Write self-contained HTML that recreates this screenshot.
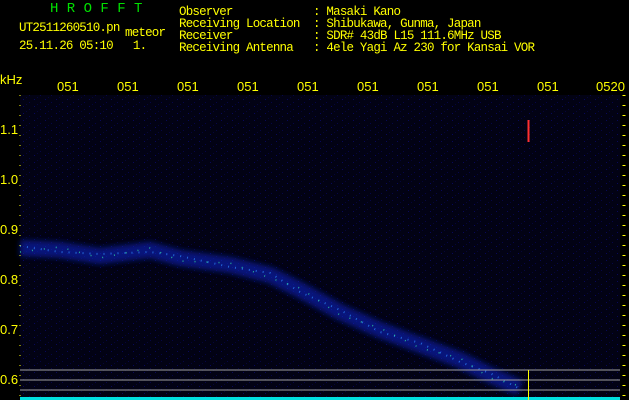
<!DOCTYPE html>
<html><head><style>
body{margin:0;background:#000;width:629px;height:400px;overflow:hidden;position:relative;font-family:"Liberation Mono",monospace;}
.t{position:absolute;color:#ffff00;font-size:12.5px;letter-spacing:-0.8px;line-height:12px;white-space:pre;}
.x{position:absolute;color:#ffff00;font-size:13px;top:79px;font-family:"Liberation Sans",sans-serif;}
.y{position:absolute;color:#ffff00;font-size:13px;left:0;font-family:"Liberation Sans",sans-serif;}
</style></head><body>
<svg width="629" height="400" style="position:absolute;left:0;top:0">
<defs>
<filter id="b"><feGaussianBlur stdDeviation="3"/></filter>
<pattern id="n" width="11" height="7" patternUnits="userSpaceOnUse">
<rect width="11" height="7" fill="#020214"/>
<rect x="1" y="1" width="1" height="1" fill="#08085a"/>
<rect x="7" y="4" width="1" height="1" fill="#060648"/>
<rect x="4" y="6" width="1" height="1" fill="#05053a"/>
</pattern>
</defs>
<rect x="20" y="95" width="600" height="305" fill="url(#n)"/>
<polyline points="20,248 60,250 100,256 150,250 180,258 230,265 270,275 300,290 340,312 380,330 420,345 460,360 490,375 520,388" fill="none" stroke="#0a20c0" stroke-width="16" opacity="0.6" filter="url(#b)"/>
<polyline points="20,246 60,252 100,254 150,252 180,256 230,267 270,273 300,292 340,310 380,332 420,343 460,362 490,373 520,389" fill="none" stroke="#2a7af0" stroke-width="2" stroke-dasharray="1 6" opacity="0.8"/>
<polyline points="20,252 60,247 100,258 150,248 180,261 230,263 270,278 300,288 340,315 380,328 420,348 460,358 490,378 520,386" fill="none" stroke="#30d0a0" stroke-width="1.5" stroke-dasharray="1 11" opacity="0.8"/>
<line x1="20" y1="370" x2="620" y2="370" stroke="#a0a0a0"/>
<line x1="20" y1="380" x2="620" y2="380" stroke="#a0a0a0"/>
<line x1="20" y1="390" x2="620" y2="390" stroke="#a0a0a0"/>
<rect x="20" y="397" width="600" height="3" fill="#00e0e0"/>
<line x1="528.5" y1="370" x2="528.5" y2="400" stroke="#ffff00"/>
<line x1="528.5" y1="120" x2="528.5" y2="142" stroke="#ff3030" stroke-width="2"/>
<line x1="20" y1="95" x2="20" y2="400" stroke="#ffff00" stroke-dasharray="1 9"/>
<line x1="624" y1="95" x2="624" y2="400" stroke="#ffff00" stroke-width="3" stroke-dasharray="1 9"/>
</svg>
<div class="t" style="left:50px;top:3px;color:#00e000;font-size:14px;letter-spacing:0;">H R O F F T</div>
<div class="t" style="left:19px;top:22px;">UT2511260510.pn</div>
<div class="t" style="left:125px;top:27px;">meteor</div>
<div class="t" style="left:19px;top:40px;">25.11.26 05:10   1.</div>
<div class="t" style="left:179px;top:6px;">Observer            : Masaki Kano
Receiving Location  : Shibukawa, Gunma, Japan
Receiver            : SDR# 43dB L15 111.6MHz USB
Receiving Antenna   : 4ele Yagi Az 230 for Kansai VOR</div>
<div class="y" style="top:72px;">kHz</div>
<div class="x" style="left:57px">051</div>
<div class="x" style="left:117px">051</div>
<div class="x" style="left:177px">051</div>
<div class="x" style="left:237px">051</div>
<div class="x" style="left:297px">051</div>
<div class="x" style="left:357px">051</div>
<div class="x" style="left:417px">051</div>
<div class="x" style="left:477px">051</div>
<div class="x" style="left:537px">051</div>
<div class="x" style="left:596px">0520</div>
<div class="y" style="top:122px;">1.1</div>
<div class="y" style="top:172px;">1.0</div>
<div class="y" style="top:222px;">0.9</div>
<div class="y" style="top:272px;">0.8</div>
<div class="y" style="top:322px;">0.7</div>
<div class="y" style="top:372px;">0.6</div>
</body></html>
